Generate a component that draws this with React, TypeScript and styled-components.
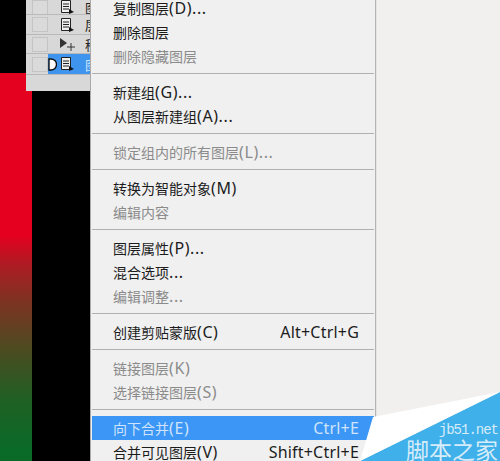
import React from "react";
import styled, { createGlobalStyle } from "styled-components";

const Global = createGlobalStyle`
  html, body { margin: 0; padding: 0; background: #f1f0ef; }
  #root { width: 500px; height: 461px; overflow: hidden; }
`;

const Page = styled.div`
  position: relative;
  display: flex;
  width: 500px;
  height: 461px;
  overflow: hidden;
  font-family: "Noto Sans CJK SC", "Noto Sans", sans-serif;
  font-size: 14px;
`;

const CanvasArea = styled.div`
  position: relative;
  flex: 0 0 90px;
  background: #000;
  display: flex;
  flex-direction: column;
`;

const RedStrip = styled.div`
  width: 32px;
  margin-top: 73px;
  flex: 1;
  background: linear-gradient(180deg, #e4001f 0, #e60020 162px, #b01a22 190px, #7f3222 227px, #4b4b20 277px, #1f6024 327px, #0a6a28 377px);
`;

const LayersPanel = styled.div`
  position: absolute;
  left: 26px;
  top: 0;
  width: 64px;
  height: 91px;
  background: #d8d8d8;
  display: flex;
  flex-direction: column;
  box-sizing: border-box;
`;

const LayerRow = styled.div<{ $h: number; $selected?: boolean }>`
  display: flex;
  align-items: center;
  height: ${(p) => p.$h}px;
  flex: 0 0 ${(p) => p.$h}px;
  border-bottom: 1px solid #b9b9b9;
  box-sizing: border-box;
  background: ${(p) => (p.$selected ? "linear-gradient(90deg, #d8d8d8 22px, #3f94ee 22px)" : "#d8d8d8")};
  overflow: hidden;
`;

const Eye = styled.div`
  flex: 0 0 16px;
  height: 15px;
  margin-left: 6px;
  border: 1px solid #c4c4c4;
  background: #dadada;
  box-sizing: border-box;
`;

const LayerIcon = styled.svg`
  flex: 0 0 16px;
  width: 16px;
  height: 16px;
  margin-left: 12px;
`;

const LinkDot = styled.svg`
  flex: 0 0 9px;
  width: 9px;
  height: 13px;
  margin-left: -28px;
  margin-right: 19px;
`;

const LayerName = styled.span<{ $selected?: boolean }>`
  margin-left: 9px;
  font-size: 13px;
  white-space: nowrap;
  color: ${(p) => (p.$selected ? "#cfe4fb" : "#222")};
`;

const Menu = styled.div`
  flex: 0 0 286px;
  box-sizing: border-box;
  background: #f0f0f0;
  border-left: 1px solid #a9a9a9;
  border-right: 1px solid #b4b4b4;
  box-shadow: 1px 0 0 #e4e4e4;
  padding: 0 1px;
  margin-top: -4px;
  height: 470px;
`;

const Item = styled.div<{ $disabled?: boolean; $active?: boolean }>`
  display: flex;
  justify-content: space-between;
  align-items: center;
  height: 24px;
  padding: 0 15px 0 21px;
  white-space: nowrap;
  color: ${(p) => (p.$active ? "#cfe3fa" : p.$disabled ? "#8b8b8b" : "#1c1c1c")};
  background: ${(p) => (p.$active ? "#3b96f5" : "transparent")};
`;

const Latin = styled.span<{ $spacing: number }>`
  font-family: "Noto Sans", sans-serif;
  font-size: 16px;
  line-height: 1;
  letter-spacing: ${(p) => p.$spacing}px;
`;

const Separator = styled.div`
  height: 12px;
  display: flex;
  align-items: flex-start;
  padding-top: 5px;
  box-sizing: border-box;
  &::before {
    content: "";
    width: 100%;
    height: 1px;
    background: #b0b0b0;
  }
`;

const Watermark = styled.svg`
  position: absolute;
  right: 0;
  bottom: 0;
  width: 140px;
  height: 70px;
`;

const WatermarkText = styled.div`
  position: absolute;
  right: 2px;
  bottom: 0;
  display: flex;
  flex-direction: column;
  align-items: flex-end;
  color: #d6ecf9;
`;

const Domain = styled.span`
  font-family: "Liberation Mono", monospace;
  font-size: 14px;
  line-height: 13px;
  letter-spacing: -1px;
  margin-bottom: 1px;
`;

const Brand = styled.span`
  font-family: "Noto Sans CJK SC", sans-serif;
  font-size: 23px;
  line-height: 23px;
`;

const LayerGlyph = () => (
  <LayerIcon viewBox="0 0 16 16">
    <path d="M1.5 1.5h9v12h-9z" fill="#efefef" stroke="#222" />
    <path d="M3 5h6M3 7.5h6M3 10h6" stroke="#222" />
    <path d="M9 10l5 3-5 2z" fill="#111" />
  </LayerIcon>
);

const Label = ({ text }: { text: string }) => (
  <span>
    {text.split(/([\x00-\x7f]+)/).map((part, i) =>
      /^[\x00-\x7f]+$/.test(part) ? (
        <Latin key={i} $spacing={0.6}>
          {part}
        </Latin>
      ) : (
        part
      )
    )}
  </span>
);

const rows: Array<
  | { kind: "sep" }
  | { kind: "item"; label: string; shortcut?: string; disabled?: boolean; active?: boolean }
> = [
  { kind: "item", label: "复制图层(D)..." },
  { kind: "item", label: "删除图层" },
  { kind: "item", label: "删除隐藏图层", disabled: true },
  { kind: "sep" },
  { kind: "item", label: "新建组(G)..." },
  { kind: "item", label: "从图层新建组(A)..." },
  { kind: "sep" },
  { kind: "item", label: "锁定组内的所有图层(L)...", disabled: true },
  { kind: "sep" },
  { kind: "item", label: "转换为智能对象(M)" },
  { kind: "item", label: "编辑内容", disabled: true },
  { kind: "sep" },
  { kind: "item", label: "图层属性(P)..." },
  { kind: "item", label: "混合选项..." },
  { kind: "item", label: "编辑调整...", disabled: true },
  { kind: "sep" },
  { kind: "item", label: "创建剪贴蒙版(C)", shortcut: "Alt+Ctrl+G" },
  { kind: "sep" },
  { kind: "item", label: "链接图层(K)", disabled: true },
  { kind: "item", label: "选择链接图层(S)", disabled: true },
  { kind: "sep" },
  { kind: "item", label: "向下合并(E)", shortcut: "Ctrl+E", active: true },
  { kind: "item", label: "合并可见图层(V)", shortcut: "Shift+Ctrl+E" },
];

export default function App() {
  return (
    <Page>
      <Global />
      <CanvasArea>
        <RedStrip />
        <LayersPanel>
          <LayerRow $h={15}>
            <Eye />
            <LayerGlyph />
            <LayerName>图</LayerName>
          </LayerRow>
          <LayerRow $h={20}>
            <Eye />
            <LayerGlyph />
            <LayerName>层</LayerName>
          </LayerRow>
          <LayerRow $h={19}>
            <Eye />
            <LayerIcon viewBox="0 0 16 16">
              <path d="M0 2l7 5-7 5z" fill="#333" />
              <path d="M11 7v8M7 11h8" stroke="#333" />
            </LayerIcon>
            <LayerName>移</LayerName>
          </LayerRow>
          <LayerRow $h={21} $selected>
            <Eye />
            <LayerGlyph />
            <LinkDot viewBox="0 0 9 13">
              <path d="M1 1h2a5 5 0 0 1 0 11H1z" fill="#fff" stroke="#111" strokeWidth="1.4" />
            </LinkDot>
            <LayerName $selected>图</LayerName>
          </LayerRow>
        </LayersPanel>
      </CanvasArea>
      <Menu>
        {rows.map((r, i) =>
          r.kind === "sep" ? (
            <Separator key={i} />
          ) : (
            <Item key={i} $disabled={r.disabled} $active={r.active}>
              <Label text={r.label} />
              {r.shortcut && <Latin $spacing={0.2}>{r.shortcut}</Latin>}
            </Item>
          )
        )}
      </Menu>
      <Watermark viewBox="0 0 140 70">
        <path d="M140 1L0 70h140z" fill="#3fb0ea" />
        <path d="M140 1L13 26 0 70z" fill="#ffffff" />
      </Watermark>
      <WatermarkText>
        <Domain>jb51.net</Domain>
        <Brand>脚本之家</Brand>
      </WatermarkText>
    </Page>
  );
}
